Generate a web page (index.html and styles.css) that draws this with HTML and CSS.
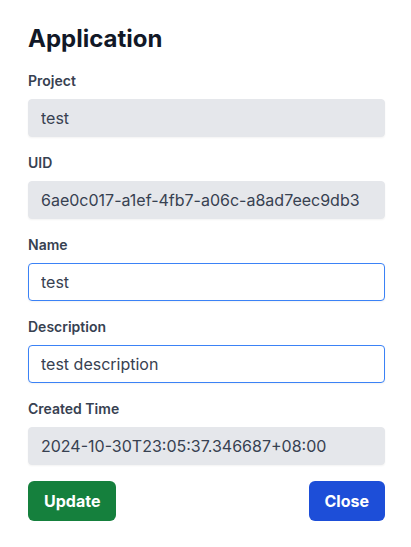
FILE: index.html
```html
<!DOCTYPE html>
<html lang="en">
<head>
<meta charset="utf-8">
<title>Application</title>
<link rel="stylesheet" href="styles.css">
</head>
<body>
<div class="panel">
  <h1 class="title">Application</h1>
  <div class="field">
    <label class="label">Project</label>
    <input class="input input-readonly" type="text" value="test" readonly>
  </div>
  <div class="field">
    <label class="label">UID</label>
    <input class="input input-readonly" type="text" value="6ae0c017-a1ef-4fb7-a06c-a8ad7eec9db3" readonly>
  </div>
  <div class="field">
    <label class="label">Name</label>
    <input class="input input-edit" type="text" value="test">
  </div>
  <div class="field">
    <label class="label">Description</label>
    <input class="input input-edit" type="text" value="test description">
  </div>
  <div class="field">
    <label class="label">Created Time</label>
    <input class="input input-readonly" type="text" value="2024-10-30T23:05:37.346687+08:00" readonly>
  </div>
  <div class="actions">
    <button class="btn btn-update" type="button">Update</button>
    <button class="btn btn-close" type="button">Close</button>
  </div>
</div>
</body>
</html>
```
FILE: styles.css
```css
* { box-sizing: border-box; }
html, body { margin: 0; padding: 0; background: #ffffff; }
body {
  font-family: Inter, "Noto Sans", sans-serif;
  color: #374151;
}
.panel {
  width: 357px;
  margin: 23px 0 0 28px;
  display: flex;
  flex-direction: column;
  gap: 16px;
}
.title {
  margin: 0;
  font-size: 24px;
  line-height: 32px;
  font-weight: 700;
  color: #111827;
}
.field {
  display: flex;
  flex-direction: column;
  gap: 8px;
}
.label {
  font-size: 14px;
  line-height: 20px;
  font-weight: 600;
  color: #374151;
}
.input {
  display: block;
  width: 100%;
  height: 38px;
  padding: 6px 12px;
  font-family: Inter, "Noto Sans", sans-serif;
  font-size: 16px;
  line-height: 24px;
  color: #374151;
  border-radius: 4px;
  box-shadow: 0 1px 2px rgba(0, 0, 0, 0.05);
  outline: none;
  margin: 0;
}
.input-readonly {
  background: #e5e7eb;
  border: 1px solid #e5e7eb;
}
.input-edit {
  background: #ffffff;
  border: 1px solid #3b82f6;
}
.actions {
  display: flex;
  justify-content: space-between;
  align-items: center;
}
.btn {
  height: 40px;
  padding: 8px 16px;
  border: none;
  border-radius: 6px;
  font-family: Inter, "Noto Sans", sans-serif;
  font-size: 16px;
  line-height: 24px;
  font-weight: 700;
  color: #ffffff;
  cursor: pointer;
}
.btn-update { background: #15803d; }
.btn-close { background: #1d4ed8; }
```
